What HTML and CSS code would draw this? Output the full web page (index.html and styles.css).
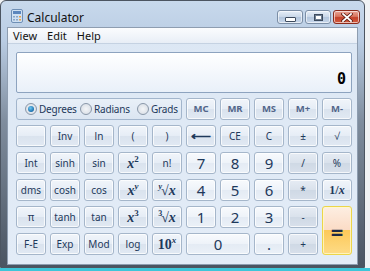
FILE: index.html
```html
<!DOCTYPE html>
<html lang="en">

<head>
    <meta charset="UTF-8">
    <title>Calculator</title>
    <link rel="stylesheet" href="styles.css">
</head>

<body>

    <div class="window">
        <!-- Title bar -->
        <div class="titlebar">
            <svg class="app-icon" width="12" height="14" viewBox="0 0 12 14">
                <rect x="0.5" y="0.5" width="11" height="13" rx="1.5" fill="#cfe0f2" stroke="#6f8fb5"/>
                <rect x="2" y="2" width="8" height="3" fill="#5b86bd"/>
                <rect x="2" y="7" width="2" height="1.5" fill="#8aa6c8"/>
                <rect x="5" y="7" width="2" height="1.5" fill="#8aa6c8"/>
                <rect x="8" y="7" width="2" height="1.5" fill="#e9a24a"/>
                <rect x="2" y="10" width="2" height="1.5" fill="#8aa6c8"/>
                <rect x="5" y="10" width="2" height="1.5" fill="#8aa6c8"/>
                <rect x="8" y="10" width="2" height="1.5" fill="#e9a24a"/>
            </svg>
            <span class="title">Calculator</span>
            <div class="controls">
                <span class="ctl"><span class="glyph-min"></span></span>
                <span class="ctl"><span class="glyph-max"></span></span>
                <span class="ctl close">
                    <svg width="12" height="9" viewBox="0 0 12 9">
                        <path d="M2 1 L10 8 M10 1 L2 8" stroke="#5a1a10" stroke-width="3.4" stroke-linecap="square"/>
                        <path d="M2 1 L10 8 M10 1 L2 8" stroke="#fff" stroke-width="1.8" stroke-linecap="square"/>
                    </svg>
                </span>
            </div>
        </div>

        <div class="client">
            <div class="menubar">
                <span>View</span>
                <span>Edit</span>
                <span>Help</span>
            </div>

            <div class="keys">
                <div class="display">0</div>

                <div class="angle">
                    <label class="deg"><span class="radio on"></span>Degrees</label>
                    <label class="rad"><span class="radio"></span>Radians</label>
                    <label><span class="radio"></span>Grads</label>
                </div>
                <button class="key mem">MC</button>
                <button class="key mem">MR</button>
                <button class="key mem">MS</button>
                <button class="key mem">M+</button>
                <button class="key mem">M-</button>

                <button class="key"></button>
                <button class="key">Inv</button>
                <button class="key">ln</button>
                <button class="key">(</button>
                <button class="key">)</button>
                <button class="key arrow">&#10229;</button>
                <button class="key">CE</button>
                <button class="key">C</button>
                <button class="key">&plusmn;</button>
                <button class="key">&radic;</button>

                <button class="key">Int</button>
                <button class="key">sinh</button>
                <button class="key">sin</button>
                <button class="key math"><i>x</i><sup>2</sup></button>
                <button class="key">n!</button>
                <button class="key digit">7</button>
                <button class="key digit">8</button>
                <button class="key digit">9</button>
                <button class="key op">/</button>
                <button class="key op">%</button>

                <button class="key">dms</button>
                <button class="key">cosh</button>
                <button class="key">cos</button>
                <button class="key math"><i>x</i><sup><i>y</i></sup></button>
                <button class="key math"><sup class="pre"><i>y</i></sup>&radic;<i>x</i></button>
                <button class="key digit">4</button>
                <button class="key digit">5</button>
                <button class="key digit">6</button>
                <button class="key op">*</button>
                <button class="key math small">1/<i>x</i></button>

                <button class="key">&pi;</button>
                <button class="key">tanh</button>
                <button class="key">tan</button>
                <button class="key math"><i>x</i><sup>3</sup></button>
                <button class="key math"><sup class="pre">3</sup>&radic;<i>x</i></button>
                <button class="key digit">1</button>
                <button class="key digit">2</button>
                <button class="key digit">3</button>
                <button class="key op">-</button>
                <button class="key equals">=</button>

                <button class="key">F-E</button>
                <button class="key">Exp</button>
                <button class="key">Mod</button>
                <button class="key">log</button>
                <button class="key math">10<sup><i>x</i></sup></button>
                <button class="key digit zero">0</button>
                <button class="key digit">.</button>
                <button class="key op">+</button>
            </div>
        </div>
    </div>

</body>

</html>
```

FILE: styles.css
```css
html {
    background: linear-gradient(to bottom, #f0f2f4 0, #f0f2f4 268px, #3ec6d9 268px);
    height: 100%;
}

body {
    margin: 0;
    font-family: 'Noto Sans', 'Open Sans', sans-serif;
    width: 370px;
    height: 271px;
    overflow: hidden;
}

.window {
    width: 365px;
    height: 268px;
    box-sizing: border-box;
    border: 1px solid #4c5561;
    border-radius: 6px 6px 0 0;
    background: linear-gradient(to bottom, #c8d9ec 0, #b9cce3 40px, #7f8d9e 120px, #4a5461 100%);
    padding: 0 6px 2px 6px;
    display: flex;
    flex-direction: column;
}

/* Title bar */
.titlebar {
    height: 26px;
    display: flex;
    align-items: center;
    padding-left: 4px;
}

.app-icon {
    margin-top: 4px;
}

.title {
    margin-left: 4px;
    margin-top: 6px;
    font-size: 12px;
    color: #111;
}

.controls {
    margin-left: auto;
    margin-right: -2px;
    display: flex;
    gap: 2px;
    align-self: flex-start;
    margin-top: 9px;
}

.ctl {
    width: 26px;
    height: 14px;
    box-sizing: border-box;
    border: 1px solid #7b8ea6;
    border-radius: 3px;
    background: linear-gradient(to bottom, #e6eef8 0, #c9d7e8 50%, #b3c6dd 51%, #c7d6ea 100%);
    display: flex;
    align-items: center;
    justify-content: center;
    box-shadow: inset 0 0 0 1px rgba(255, 255, 255, 0.6);
}

.glyph-min {
    width: 9px;
    height: 3px;
    margin-top: 4px;
    background: #fff;
    border: 1px solid #3d4b5e;
    border-radius: 1px;
}

.glyph-max {
    width: 7px;
    height: 5px;
    border: 1px solid #3d4b5e;
    background: #fff;
    box-shadow: inset 0 0 0 1px #6f7f93;
}

.ctl.close {
    width: 27px;
    border-color: #8a2b1c;
    background: linear-gradient(to bottom, #eaa597 0, #d8765f 45%, #c4422b 55%, #d25a3c 100%);
}

/* Client area */
.client {
    flex: 1;
    background: linear-gradient(to bottom, #dce7f4, #e3ecf7);
    border: 1px solid #8e9db0;
    display: flex;
    flex-direction: column;
}

.menubar {
    height: 15px;
    display: flex;
    align-items: center;
    gap: 10px;
    padding-left: 5px;
    font-size: 11px;
    color: #111;
    background: linear-gradient(to bottom, #fbfcfe, #e8eef6);
    border-bottom: 1px solid #c5d2e2;
}

.keys {
    display: grid;
    grid-template-columns: repeat(10, 30px);
    grid-template-rows: 41px repeat(6, 22px);
    column-gap: 4px;
    row-gap: 5px;
    padding: 8px 0 0 8px;
}

.display {
    grid-column: 1 / -1;
    border: 1px solid #8da3bf;
    border-radius: 2px;
    background: linear-gradient(to bottom, #ffffff, #e9f0f9);
    font-family: 'DejaVu Sans Mono', monospace;
    font-weight: bold;
    font-size: 15px;
    color: #000;
    text-align: right;
    padding: 17px 5px 0 0;
    box-sizing: border-box;
}

.angle {
    grid-column: span 5;
    border: 1px solid #a2b5cc;
    border-radius: 3px;
    background: linear-gradient(to bottom, #e9f0f8, #dbe5f1);
    display: flex;
    align-items: center;
    padding-left: 8px;
    font-size: 10px;
    letter-spacing: -0.2px;
    color: #1e395b;
    white-space: nowrap;
}

.angle label {
    display: flex;
    align-items: center;
}

.angle label.deg {
    width: 55px;
}

.angle label.rad {
    width: 57px;
}

.radio {
    width: 10px;
    height: 10px;
    flex: none;
    border-radius: 50%;
    border: 1px solid #8a98a9;
    background: radial-gradient(circle, #f4f6f8 0, #d4dae2 100%);
    margin-right: 2px;
    position: relative;
}

.radio.on::after {
    content: "";
    position: absolute;
    left: 2px;
    top: 2px;
    width: 6px;
    height: 6px;
    border-radius: 50%;
    background: radial-gradient(circle at 40% 35%, #6ec8f2 0, #1b6fae 70%, #0c4a83 100%);
}

.key {
    margin: 0;
    padding: 0;
    border: 1px solid #a5b6ca;
    border-radius: 3px;
    background: linear-gradient(to bottom, #f1f5fa 0, #e6edf6 48%, #dae3ee 52%, #e1e9f3 100%);
    box-shadow: inset 0 0 0 1px rgba(255, 255, 255, 0.75);
    font-family: 'Noto Sans', 'Open Sans', sans-serif;
    font-size: 10px;
    color: #1e395b;
    line-height: 1;
    white-space: nowrap;
}

.key.mem {
    font-size: 9.5px;
    font-weight: bold;
    color: #52668a;
}

.key.arrow {
    font-size: 14px;
    font-weight: bold;
}

.key.digit {
    font-size: 15px;
    background: linear-gradient(to bottom, #f8fafd 0, #eef3f9 48%, #e4ebf4 52%, #ebf1f8 100%);
}

.key.op {
    background: linear-gradient(to bottom, #e6ecf4 0, #dae2ec 48%, #cfd9e5 52%, #d8e0eb 100%);
}

.key.math {
    font-family: 'Liberation Serif', serif;
    font-weight: bold;
    font-size: 14px;
}

.key.math.small {
    font-size: 12px;
}

.key.math sup {
    font-size: 9px;
    vertical-align: 6px;
}

.key.math sup.pre {
    font-size: 8px;
    margin-right: -1px;
}

.key.zero {
    grid-column: span 2;
}

.key.equals {
    grid-row: span 2;
    border-color: #ecd54a;
    background: linear-gradient(to bottom, #fdeee2 0, #fbdcc6 48%, #fcc95a 50%, #fddb86 100%);
    box-shadow: inset 0 0 0 1px rgba(255, 250, 200, 0.8);
    font-size: 22px;
    font-weight: bold;
    color: #1e2a45;
}
```
